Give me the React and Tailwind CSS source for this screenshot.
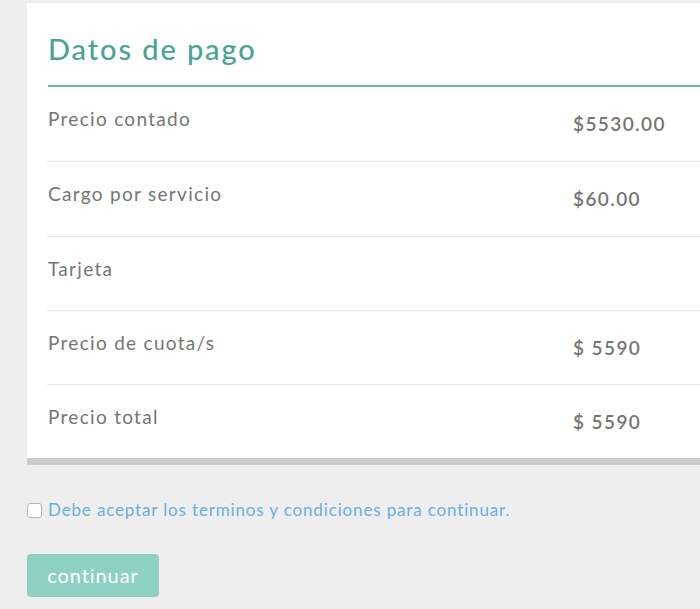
export default function App() {
  const rows = [
    { label: "Precio contado", value: "$5530.00", h: "h-[75px]" },
    { label: "Cargo por servicio", value: "$60.00", h: "h-[75px]" },
    { label: "Tarjeta", value: "", h: "h-[74px]" },
    { label: "Precio de cuota/s", value: "$ 5590", h: "h-[74px]" },
    { label: "Precio total", value: "$ 5590", h: "h-[73px]" },
  ];
  return (
    <div
      className="w-[700px] h-[609px] overflow-hidden bg-[#eeeeee] pt-[3px]"
      style={{ fontFamily: "Lato, 'Open Sans', sans-serif" }}
    >
      <div className="ml-[27px] w-[720px] bg-white border-b-[7px] border-[#cccccc]">
        <div className="ml-[21px] h-[84px] border-b-2 border-[#66b8aa] pt-[28px]">
          <h1 className="text-[29px] leading-[36px] font-medium tracking-[1.9px] text-[#4aa394]">Datos de pago</h1>
        </div>
        {rows.map((r, i) => (
          <div
            key={i}
            className={`ml-[20px] flex ${r.h} ${i < rows.length - 1 ? "border-b border-[#e6e6e6]" : ""}`}
          >
            <div className="w-[526px] pl-[1px] pt-[20px] text-[19px] leading-[24px] tracking-[1.3px] text-[#757575]">{r.label}</div>
            <div className="pt-[25px] text-[19px] leading-[24px] font-semibold tracking-[1.4px] text-[#757575]">{r.value}</div>
          </div>
        ))}
      </div>
      <div className="ml-[27px] mt-[35px] flex items-center gap-[6px] h-[20px]">
        <span className="w-[15px] h-[15px] rounded-[3px] border border-[#b5b5b5] bg-white"></span>
        <span className="text-[17px] leading-[20px] tracking-[0.85px] text-[#6aafe0]">
          Debe aceptar los terminos y condiciones para continuar.
        </span>
      </div>
      <button className="ml-[27px] mt-[34px] w-[132px] h-[43px] rounded-[4px] bg-[#8ed1c4] text-white text-[20px] leading-[24px] tracking-[0.9px] pb-[2px]">
        continuar
      </button>
    </div>
  );
}
